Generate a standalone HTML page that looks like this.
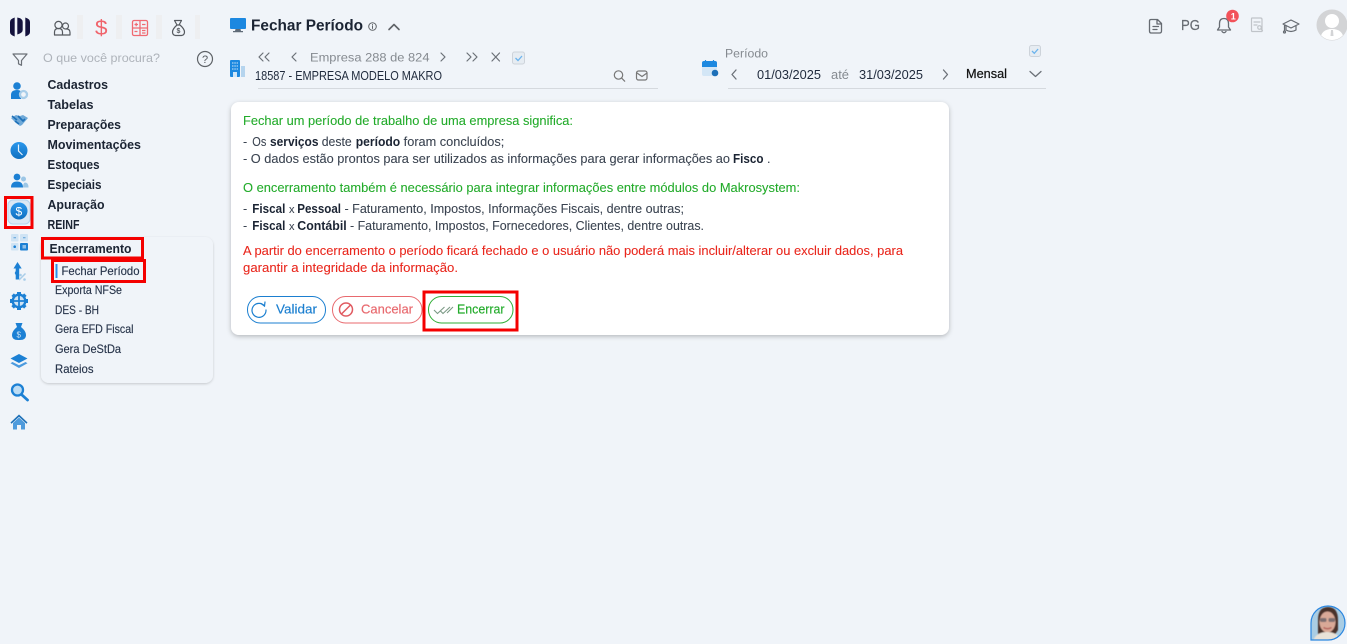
<!DOCTYPE html>
<html lang="pt-BR">
<head>
<meta charset="utf-8">
<title>Fechar Período</title>
<style>
html,body{margin:0;padding:0;width:1347px;height:644px;overflow:hidden;background:#f0f4f9}
svg{display:block;position:absolute;left:0;top:0}
text{font-family:"Liberation Sans",sans-serif;font-size:12.5px;fill:#1f2a3c}
.m{font-weight:bold;font-size:12.8px;fill:#1b2433}
.s{font-size:12px;fill:#27344a;stroke:#27344a;stroke-width:.15}
.b{font-weight:bold;fill:#1b2433}
.t{fill:#3a4350;stroke:#3a4350;stroke-width:.08}
.x{font-size:11px}
.g{fill:#22ab2a;stroke:#22ab2a;stroke-width:.08}
.r{fill:#e9261c;stroke:#e9261c;stroke-width:.08}
.ic{fill:none;stroke-width:1.2;stroke-linecap:round;stroke-linejoin:round}
</style>
</head>
<body>
<svg width="1347" height="644" viewBox="0 0 1347 644" xmlns="http://www.w3.org/2000/svg">
<defs>
<filter id="sh" x="-5%" y="-10%" width="110%" height="120%"><feDropShadow dx="0" dy="1.500" stdDeviation="2.500" flood-color="#000" flood-opacity=".25"/></filter>
<filter id="sh2" x="-5%" y="-5%" width="110%" height="110%"><feDropShadow dx="0" dy="1" stdDeviation="1.200" flood-color="#000" flood-opacity=".18"/></filter>
<filter id="bl1" x="-10%" y="-10%" width="120%" height="120%"><feGaussianBlur stdDeviation=".6"/></filter>
<linearGradient id="bl" x1="0" y1="0" x2="0" y2="1"><stop offset="0" stop-color="#2b97ec"/><stop offset="1" stop-color="#0f6fc0"/></linearGradient>
<clipPath id="av"><circle cx="1332" cy="25" r="15"/></clipPath>
<clipPath id="ph"><path d="M1311 623a17 17 0 1 1 17 17h-17z"/></clipPath>
</defs>
<rect width="1347" height="644" fill="#f0f4f9"/>

<!-- logo -->
<path d="M14.700 17.500Q10 19 10 22V32Q10 35 14.700 36.500Z" fill="#14123d"/>
<path d="M17.300 17.500Q22.700 18.500 22.700 22V30Q22.700 33 17.300 34.500Z" fill="#14123d"/>
<path d="M25.300 17.500Q30 19 30 22V32Q30 35 25.300 36.500Z" fill="#14123d"/>

<!-- top toolbar separators -->
<rect x="77" y="15" width="6" height="24" fill="#eeeff1"/>
<rect x="116" y="15" width="6" height="24" fill="#eeeff1"/>
<rect x="156" y="15" width="6" height="24" fill="#eeeff1"/>
<rect x="195" y="15" width="5" height="24" fill="#eeeff1"/>

<!-- people icon -->
<g class="ic" style="stroke:#55595f"><circle cx="58.500" cy="25" r="3.600"/><circle cx="65.500" cy="26" r="3"/><path d="M54.500 35v-3q0-3.500 4-3.500t4 3.500v3zM62.500 35h7.500v-2.500q0-3.500-3.500-3.500"/></g>
<!-- dollar -->
<text x="95" y="35" style="font-size:21px;fill:#f0646c" textLength="12.500" lengthAdjust="spacingAndGlyphs">$</text>
<!-- calculator -->
<g fill="none" stroke="#f06a72" stroke-width="1.300"><rect x="132.500" y="20.500" width="15" height="15" rx="1.500"/><path d="M140 20.500v15M132.500 28h15"/></g>
<g stroke="#f06a72" stroke-width="1.200"><path d="M134.500 24.500h3.500M136.200 22.700v3.500M142 24.500h3.500M134.500 31.500h3M142 30.500h3.500M142 33h3.500"/></g>
<!-- money bag -->
<g class="ic" style="stroke:#55595f"><path d="M177 25l-2.500-4.500h7L179 25M177 25q-4.500 4-4.500 7t3 3.500h6q3-.5 3-3.500t-4.500-7z"/></g>
<text x="176.500" y="33" style="font-size:7px;fill:#55595f;font-weight:bold">$</text>

<!-- filter + search -->
<path d="M13 54h14l-5.500 6.500v4.800l-3 -1.500v-3.300z" class="ic" style="stroke:#6b7077"/>
<text x="43" y="62" style="fill:#aeb3ba;font-size:12.300px" textLength="117" lengthAdjust="spacingAndGlyphs">O que você procura?</text>
<circle cx="205" cy="59" r="7.500" class="ic" style="stroke:#5f6368"/>
<text x="202" y="63" style="font-size:11px;fill:#55595f">?</text>

<!-- left rail icons -->
<circle cx="17" cy="86" r="3.800" fill="#1c80d4"/>
<path d="M11 99v-4q0-5 6-5 3 0 4 1.500v7.500z" fill="#1c80d4"/>
<circle cx="23.500" cy="94.500" r="3.500" fill="none" stroke="#a8cde9" stroke-width="2.300"/>
<path d="M11 118l5-3 4 1 3-1 5 3-6 7-2 1-4-3z" fill="#6ea8d8"/>
<path d="M12 116l5 4M18 116l5 5 2-2M15 121l4 3" stroke="#1c6fb8" stroke-width="1.600" fill="none"/>
<circle cx="19" cy="150.500" r="8.500" fill="url(#bl)"/>
<path d="M18.500 144.500v6.500l4 4" stroke="#e8f2fb" stroke-width="1.200" fill="none"/>
<circle cx="17" cy="177" r="3.400" fill="#1c80d4"/>
<path d="M11 187.500q0-6 6-6t6 6z" fill="#1c80d4"/>
<circle cx="23.500" cy="179" r="2.500" fill="#9cc6e6"/>
<path d="M23 187.500q0-4.500 2-5 3.500 0 3.500 5z" fill="#9cc6e6"/>
<!-- selected -->
<rect x="8" y="200" width="22" height="24" rx="5" fill="#dbe8f4" stroke="#b5d4ee"/>
<circle cx="19" cy="211" r="8.500" fill="url(#bl)"/>
<text x="15.500" y="215.500" style="font-size:12px;fill:#fff">$</text>
<!-- calc rail -->
<rect x="11" y="234" width="7.500" height="7.500" rx="1" fill="#cfe3f4"/>
<rect x="20" y="234" width="8" height="7.500" rx="1" fill="#cfe3f4"/>
<rect x="11" y="243" width="7.500" height="7.500" rx="1" fill="#cfe3f4"/>
<rect x="20" y="243" width="8" height="7.500" rx="1" fill="#1c80d4"/>
<path d="M13.500 237.700h2.500M23 237.700h2.500" stroke="#5a9ed8"/><circle cx="14.700" cy="246.700" r="1.300" fill="#1c80d4"/><rect x="22.500" y="245" width="3.500" height="3.500" fill="#8fc0e8"/>
<!-- arrow percent -->
<path d="M17.500 262l-4 6.500h2.200v2.500l-1 2 1 2v4.500h3.500v-11h2.500z" fill="#1c80d4"/>
<path d="M19 280l6.500-6.500" stroke="#a8cde9" stroke-width="1.500"/><circle cx="20.500" cy="275" r="1.300" fill="#a8cde9"/><circle cx="24.500" cy="279.500" r="1.300" fill="#a8cde9"/>
<!-- gear -->
<circle cx="19" cy="301" r="6.300" fill="#cfe3f4" stroke="#1c80d4" stroke-width="2.400"/>
<path d="M19 294v14M12 301h14" stroke="#1c80d4" stroke-width="1.800"/>
<g fill="#1c80d4"><rect x="17" y="292" width="4" height="3"/><rect x="17" y="307" width="4" height="3"/><rect x="10" y="299" width="3" height="4"/><rect x="25" y="299" width="3" height="4"/>
<rect x="17.300" y="292" width="3.500" height="3" transform="rotate(45 19 301)"/><rect x="17.300" y="292" width="3.500" height="3" transform="rotate(135 19 301)"/><rect x="17.300" y="292" width="3.500" height="3" transform="rotate(225 19 301)"/><rect x="17.300" y="292" width="3.500" height="3" transform="rotate(315 19 301)"/></g>
<!-- bag rail -->
<path d="M15.500 323h7l-1.500 4q5 4 5 8 0 5-6 5h-2q-6 0-6-5 0-4 5-8z" fill="#1c80d4"/>
<text x="16.500" y="337.500" style="font-size:8px;fill:#cfe3f4">$</text>
<!-- layers -->
<path d="M19 354l8.500 4.500-8.500 4.500-8.500-4.500z" fill="#1c80d4"/>
<path d="M12.500 362l6.500 3.300 6.500-3.300 2 1.300-8.500 4.700-8.500-4.700z" fill="#4b9ade"/>
<!-- search rail -->
<circle cx="17.500" cy="390" r="5.500" fill="#bcdcf4" stroke="#1c80d4" stroke-width="2.300"/>
<path d="M22 395l5.500 5" stroke="#1c80d4" stroke-width="2.800" stroke-linecap="round"/>
<!-- home -->
<path d="M13 423l6-5.500 6 5.500v6.500h-4v-4.500h-4v4.500h-4z" fill="#4f9bdc"/>
<path d="M10.500 422.500l8.500-8 8.500 8-1 1.200-7.500-7-7.500 7z" fill="#1c70b8"/>

<!-- main menu -->
<text class="m" x="47.500" y="89" textLength="60.500" lengthAdjust="spacingAndGlyphs">Cadastros</text>
<text class="m" x="47.500" y="109" textLength="46" lengthAdjust="spacingAndGlyphs">Tabelas</text>
<text class="m" x="47.500" y="129" textLength="73.500" lengthAdjust="spacingAndGlyphs">Preparações</text>
<text class="m" x="47.500" y="149" textLength="93.500" lengthAdjust="spacingAndGlyphs">Movimentações</text>
<text class="m" x="47.500" y="169" textLength="52" lengthAdjust="spacingAndGlyphs">Estoques</text>
<text class="m" x="47.500" y="189" textLength="54" lengthAdjust="spacingAndGlyphs">Especiais</text>
<text class="m" x="47.500" y="209" textLength="57" lengthAdjust="spacingAndGlyphs">Apuração</text>
<text class="m" x="47.500" y="229" textLength="32" lengthAdjust="spacingAndGlyphs">REINF</text>

<!-- submenu -->
<rect x="41" y="237" width="172" height="146" rx="8" fill="#f0f4f9" filter="url(#sh2)"/>
<text class="m" x="49.500" y="253" textLength="82" lengthAdjust="spacingAndGlyphs">Encerramento</text>
<rect x="55.500" y="264" width="2" height="14" fill="#2a8fe8"/>
<text class="s" x="61.500" y="275" textLength="78" lengthAdjust="spacingAndGlyphs">Fechar Período</text>
<text class="s" x="55" y="294" textLength="67" lengthAdjust="spacingAndGlyphs">Exporta NFSe</text>
<text class="s" x="55" y="314" textLength="44" lengthAdjust="spacingAndGlyphs">DES - BH</text>
<text class="s" x="55" y="333" textLength="78.500" lengthAdjust="spacingAndGlyphs">Gera EFD Fiscal</text>
<text class="s" x="55" y="353" textLength="66" lengthAdjust="spacingAndGlyphs">Gera DeStDa</text>
<text class="s" x="55" y="373" textLength="38.500" lengthAdjust="spacingAndGlyphs">Rateios</text>

<!-- header -->
<rect x="230" y="18" width="16" height="11" rx="1" fill="#1c88e0"/>
<path d="M235.500 29h5l.5 2h2v1.200h-10v-1.200h2z" fill="#5f6b78"/>
<text x="251" y="30.500" style="font-size:16px;font-weight:bold;fill:#1b2433" textLength="112" lengthAdjust="spacingAndGlyphs">Fechar Período</text>
<circle cx="372.500" cy="26.500" r="3.800" class="ic" style="stroke:#5f6368;stroke-width:1"/>
<path d="M372.500 26v2.500M372.500 24.500v.4" class="ic" style="stroke:#5f6368;stroke-width:1"/>
<path d="M389 29.500l5-5 5 5" class="ic" style="stroke:#5f6368;stroke-width:1.600"/>

<!-- empresa row -->
<g class="ic" style="stroke:#6b7077">
<path d="M263 53l-4 4 4 4M269 53l-4 4 4 4"/>
<path d="M296 53l-4 4 4 4"/>
<path d="M441 53l4 4-4 4"/>
<path d="M467 53l4 4-4 4M473 53l4 4-4 4"/>
<path d="M492 53l7.500 8M499.500 53l-7.500 8"/>
</g>
<text x="310" y="61.500" style="fill:#858a90;font-size:12.300px" textLength="119.500" lengthAdjust="spacingAndGlyphs">Empresa 288 de 824</text>
<rect x="512.500" y="52" width="12" height="12" rx="2" fill="#e6ecf2" stroke="#cdd3da"/>
<path d="M515.500 58l2.500 2.500 4-4.500" fill="none" stroke="#6cb4ee" stroke-width="1.300"/>
<rect x="230" y="60" width="10" height="17" rx="1" fill="#1c88e0"/>
<rect x="241" y="66" width="4" height="11" fill="#b5d4ee"/>
<path d="M232 63h6M232 66h6M232 69h6" stroke="#cfe6f8" stroke-dasharray="1.500 .8"/>
<rect x="233" y="72" width="4" height="5" fill="#cfe6f8"/>
<text x="255" y="80" style="font-size:12.500px;fill:#1f2a3c" textLength="187" lengthAdjust="spacingAndGlyphs">18587 - EMPRESA MODELO MAKRO</text>
<circle cx="618.500" cy="75" r="4.200" class="ic" style="stroke:#777"/>
<path d="M621.700 78.200l3 3" class="ic" style="stroke:#777"/>
<rect x="636.500" y="71" width="10.500" height="9" rx="2" class="ic" style="stroke:#777"/>
<path d="M637 73l5 3.500 5-3.500" class="ic" style="stroke:#777"/>
<rect x="258" y="88" width="400" height="1" fill="#d5d9de"/>

<!-- periodo -->
<text x="725" y="57.500" style="fill:#858a90;font-size:12.300px" textLength="43" lengthAdjust="spacingAndGlyphs">Período</text>
<rect x="1029.500" y="45.500" width="11" height="11" rx="2" fill="#e6ecf2" stroke="#cdd3da"/>
<path d="M1032 51l2.300 2.300 3.800-4.300" fill="none" stroke="#6cb4ee" stroke-width="1.300"/>
<rect x="702" y="61" width="15" height="15" rx="2" fill="#d3e6f6"/>
<path d="M702 63q0-2 2-2h11q2 0 2 2v4h-15z" fill="#1c88e0"/>
<path d="M705.500 60v2.500M713.500 60v2.500" stroke="#1c88e0" stroke-width="1.200"/>
<circle cx="715" cy="73" r="3.300" fill="#1c6fb8"/>
<g class="ic" style="stroke:#6b7077;stroke-width:1.300">
<path d="M736 70l-4 4.500 4 4.500"/>
<path d="M943.500 70l4 4.500-4 4.500"/>
<path d="M1030 71.500l5.500 5 5.500-5"/>
</g>
<text x="757" y="79" style="font-size:12.500px;fill:#1f2a3c" textLength="64" lengthAdjust="spacingAndGlyphs">01/03/2025</text>
<text x="831" y="79" style="font-size:12.500px;fill:#858a90" textLength="18" lengthAdjust="spacingAndGlyphs">até</text>
<text x="859" y="79" style="font-size:12.500px;fill:#1f2a3c" textLength="64" lengthAdjust="spacingAndGlyphs">31/03/2025</text>
<text x="966" y="78" style="font-size:12.500px;fill:#111;stroke:#111;stroke-width:.2" textLength="41" lengthAdjust="spacingAndGlyphs">Mensal</text>
<rect x="728" y="88" width="318" height="1" fill="#d5d9de"/>

<!-- top right -->
<g class="ic" style="stroke:#666b72;stroke-width:1.300">
<path d="M1151 19.500h6.500l4 4v7.500q0 2-2 2h-8.500q-1.500 0-1.500-2v-10q0-1.500 1.500-1.500zM1157 20v4h4M1153 26.500h5.500M1153 29.500h4"/>
<path d="M1224 18.500q-4.500 0-4.500 5v3.500l-2 3h13l-2-3v-3.500q0-5-4.500-5zM1222 31.500q2 2.500 4 0"/>
</g>
<text x="1181" y="30" style="font-size:15px;fill:#666b72;stroke:#666b72;stroke-width:.2" textLength="19" lengthAdjust="spacingAndGlyphs">PG</text>
<circle cx="1232.500" cy="16" r="6.300" fill="#f2525a"/>
<text x="1230.800" y="19.500" style="font-size:9px;font-weight:bold;fill:#fff">1</text>
<g class="ic" style="stroke:#c0c4c9">
<path d="M1252 18h8.500q1.500 0 1.500 1.500v12h-10q-.5 0-.5-1.500v-11q0-1 .5-1zM1254 22h6M1254 25h3"/>
<circle cx="1259.500" cy="27.500" r="1.800"/><path d="M1261 29l1.500 1.500"/>
</g>
<g class="ic" style="stroke:#666b72">
<path d="M1291 20l-8 4 8 4 8-4zM1286 26v4q5 3 10 0v-4M1284.500 25v6"/>
<circle cx="1284.500" cy="32" r="1"/>
</g>
<circle cx="1332" cy="25" r="15.500" fill="#d3d4d6"/>
<g clip-path="url(#av)">
<circle cx="1332" cy="21" r="7" fill="#fff"/>
<path d="M1320 42q0-13 12-13t12 13z" fill="#fff"/>
<path d="M1331 30h2l.5 6h-3z" fill="#d3d4d6"/>
</g>

<!-- card -->
<rect x="231" y="102" width="718" height="233" rx="8" fill="#fff" filter="url(#sh)"/>
<text class="g" x="243" y="125" textLength="330" lengthAdjust="spacingAndGlyphs">Fechar um período de trabalho de uma empresa significa:</text>
<text class="t" x="243" y="146">-</text>
<text class="t" x="252.300" y="146" textLength="14" lengthAdjust="spacingAndGlyphs">Os</text>
<text class="b" x="270" y="146" textLength="48.500" lengthAdjust="spacingAndGlyphs">serviços</text>
<text class="t" x="321.700" y="146" textLength="30" lengthAdjust="spacingAndGlyphs">deste</text>
<text class="b" x="355.700" y="146" textLength="44.500" lengthAdjust="spacingAndGlyphs">período</text>
<text class="t" x="403.700" y="146" textLength="100.600" lengthAdjust="spacingAndGlyphs">foram concluídos;</text>
<text class="t" x="243" y="163" textLength="487" lengthAdjust="spacingAndGlyphs">- O dados estão prontos para ser utilizados as informações para gerar informações ao</text>
<text class="b" x="733" y="163" textLength="30.500" lengthAdjust="spacingAndGlyphs">Fisco</text>
<text class="t" x="767" y="163">.</text>
<text class="g" x="243" y="192" textLength="557" lengthAdjust="spacingAndGlyphs">O encerramento também é necessário para integrar informações entre módulos do Makrosystem:</text>
<text class="t" x="243" y="213">-</text>
<text class="b" x="252.300" y="213" textLength="33" lengthAdjust="spacingAndGlyphs">Fiscal</text>
<text class="t x" x="289" y="213">x</text>
<text class="b" x="297.300" y="213" textLength="43.700" lengthAdjust="spacingAndGlyphs">Pessoal</text>
<text class="t" x="344.500" y="213" textLength="339.500" lengthAdjust="spacingAndGlyphs">- Faturamento, Impostos, Informações Fiscais, dentre outras;</text>
<text class="t" x="243" y="230">-</text>
<text class="b" x="252.300" y="230" textLength="33" lengthAdjust="spacingAndGlyphs">Fiscal</text>
<text class="t x" x="289" y="230">x</text>
<text class="b" x="297.300" y="230" textLength="49.400" lengthAdjust="spacingAndGlyphs">Contábil</text>
<text class="t" x="350" y="230" textLength="354" lengthAdjust="spacingAndGlyphs">- Faturamento, Impostos, Fornecedores, Clientes, dentre outras.</text>
<text class="r" x="243" y="255" textLength="660" lengthAdjust="spacingAndGlyphs">A partir do encerramento o período ficará fechado e o usuário não poderá mais incluir/alterar ou excluir dados, para</text>
<text class="r" x="243" y="272" textLength="215" lengthAdjust="spacingAndGlyphs">garantir a integridade da informação.</text>

<!-- buttons -->
<rect x="247.500" y="296.500" width="78" height="26.500" rx="13" fill="#fff" stroke="#1b7fd0"/>
<path d="M264.500 306a7 7 0 1 0 1.500 4" fill="none" stroke="#1b7fd0" stroke-width="1.200" stroke-linecap="round"/>
<path d="M261 303.500l3.500 2.500.5-4" fill="none" stroke="#1b7fd0" stroke-width="1.200" stroke-linecap="round"/>
<text x="276" y="313.500" style="fill:#1b7fd0;stroke:#1b7fd0;stroke-width:.15" textLength="41" lengthAdjust="spacingAndGlyphs">Validar</text>
<rect x="332.500" y="296.500" width="89.500" height="26.500" rx="13" fill="#fff" stroke="#e8696e"/>
<circle cx="346" cy="309.500" r="6.500" fill="none" stroke="#e05a60" stroke-width="1.500"/>
<path d="M341.500 314l9-9" stroke="#e05a60" stroke-width="1.500"/>
<text x="361" y="313.500" style="fill:#e8696e;stroke:#e8696e;stroke-width:.15" textLength="52" lengthAdjust="spacingAndGlyphs">Cancelar</text>
<rect x="428.500" y="296.500" width="84.500" height="26.500" rx="13" fill="#fff" stroke="#2fae36"/>
<path d="M434 310l3.500 3.500 7-6.500M440.500 311l2.500 2.500 7-6.500M447 313l6-6" fill="none" stroke="#7c9a86" stroke-width="1.100"/>
<text x="457" y="313.500" style="fill:#22ab2a;stroke:#22ab2a;stroke-width:.15" textLength="47.500" lengthAdjust="spacingAndGlyphs">Encerrar</text>

<!-- red highlight boxes -->
<g fill="none" stroke="#f40000" stroke-width="3">
<rect x="5.500" y="197.500" width="26.500" height="30"/>
<rect x="42.500" y="238.500" width="100" height="19.500"/>
<rect x="52.500" y="260.500" width="92" height="21"/>
<rect x="424" y="292" width="93" height="38"/>
</g>

<!-- assistant avatar -->
<g clip-path="url(#ph)">
<rect x="1310" y="605" width="36" height="36" fill="#a9cde4"/>
<g filter="url(#bl1)">
<path d="M1318 636v-16q0-13 10-13t10 13v10l-4 6z" fill="#4a312b"/>
<ellipse cx="1327.500" cy="622" rx="8" ry="10.500" fill="#d9a997"/>
<rect x="1320" y="618" width="6.500" height="4" rx="1.500" fill="#7d6e70"/>
<rect x="1328.500" y="618" width="6.500" height="4" rx="1.500" fill="#7d6e70"/>
<path d="M1323.500 627.500q4 2.500 8 0" stroke="#b4605a" stroke-width="1.500" fill="none"/>
<path d="M1313 641q3-9 14-9t14 9z" fill="#e8e2d8"/>
</g>
</g>
<path d="M1311 623a17 17 0 1 1 17 17h-17z" fill="none" stroke="#2a86e0" stroke-width="1.200"/>
</svg>
</body>
</html>
